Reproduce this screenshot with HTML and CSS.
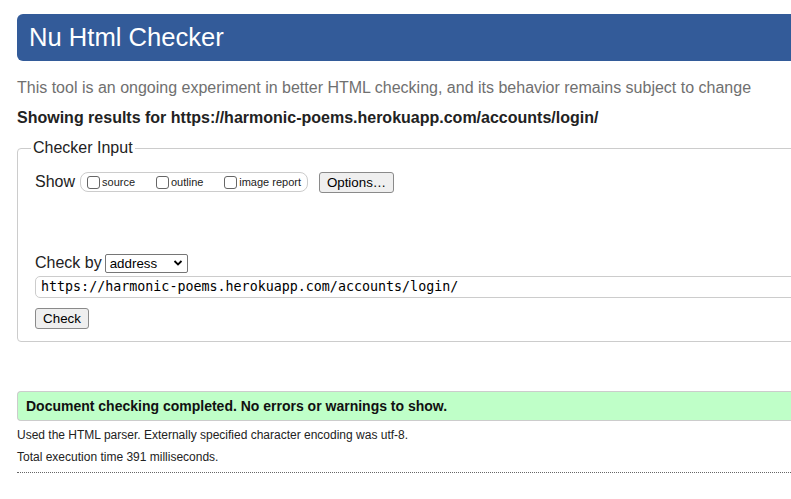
FILE: index.html
```html
<!DOCTYPE html>
<html>
<head>
<meta charset="utf-8">
<link rel="stylesheet" href="styles.css">
</head>
<body>
<div class="page">
  <h1 class="banner">Nu Html Checker</h1>
  <p class="intro">This tool is an ongoing experiment in better HTML checking, and its behavior remains subject to change</p>
  <p class="showing">Showing results for https://harmonic-poems.herokuapp.com/accounts/login/</p>
  <fieldset class="input-box">
    <legend class="legend">Checker Input</legend>
    <div class="show-row">
      <span class="show-label">Show</span>
      <span class="pill">
        <label class="opt"><span class="cb"></span>source</label>
        <label class="opt"><span class="cb"></span>outline</label>
        <label class="opt"><span class="cb"></span>image report</label>
      </span>
      <button class="btn btn-options">Options…</button>
    </div>
    <div class="checkby-row">
      <span class="show-label">Check by</span>
      <span class="select">address<svg class="chev" width="10" height="8" viewBox="0 0 10 8"><path d="M1.5 2 L5 5.5 L8.5 2" fill="none" stroke="#000" stroke-width="1.8"/></svg></span>
    </div>
    <div class="url">https://harmonic-poems.herokuapp.com/accounts/login/</div>
    <button class="btn btn-check">Check</button>
  </fieldset>
  <div class="success">Document checking completed. No errors or warnings to show.</div>
  <p class="details">Used the HTML parser. Externally specified character encoding was utf-8.</p>
  <p class="details">Total execution time 391 milliseconds.</p>
  <hr class="dots">
</div>
</body>
</html>
```
FILE: styles.css
```css
html, body {
  margin: 0;
  padding: 0;
  overflow: hidden;
  background: #fff;
}
body {
  font-family: "Liberation Sans", Arial, sans-serif;
  color: #222;
  width: 791px;
  height: 499px;
}
.page {
  padding: 14px 0 0 17px;
  width: 820px;
}
.banner {
  margin: 0;
  height: 47px;
  line-height: 47px;
  background: #335b99;
  color: #fff;
  font-size: 25.6px;
  font-weight: normal;
  padding-left: 12px;
  border-radius: 6px;
}
.intro {
  margin: 17px 0 0;
  font-size: 16px;
  line-height: 20px;
  color: #707070;
}
.showing {
  margin: 10px 0 0;
  font-size: 16px;
  line-height: 20px;
  font-weight: bold;
  color: #222;
}
.input-box {
  margin: 11px 0 0;
  border: 1px solid #ccc;
  border-radius: 4px;
  padding: 8px 17px 12px;
  min-width: 0;
}
.legend {
  font-size: 16px;
  color: #222;
  padding: 0 2px;
  margin-left: -4px;
  line-height: 18px;
}
.show-row {
  display: flex;
  align-items: center;
  height: 22px;
  margin-top: 6px;
}
.show-label {
  font-size: 16px;
  color: #222;
  margin-right: 4px;
}
.pill {
  display: inline-flex;
  align-items: center;
  height: 18px;
  border: 1px solid #ccc;
  border-radius: 8px;
  padding: 0 6px;
  width: 214px;
  justify-content: space-between;
  margin-left: 1px;
}
.opt {
  display: inline-flex;
  align-items: center;
  font-size: 11px;
  color: #222;
}
.cb {
  width: 11px;
  height: 11px;
  border: 1px solid #666;
  border-radius: 3px;
  margin-right: 2px;
  background: #fff;
}
.btn {
  font-family: "Liberation Sans", Arial, sans-serif;
  font-size: 13.33px;
  color: #000;
  background: #efefef;
  border: 1px solid #8a8a8a;
  border-radius: 3px;
  padding: 0 6px;
  height: 21px;
  line-height: 19px;
}
.btn-options {
  margin-left: 11px;
  width: 75px;
}
.checkby-row {
  display: flex;
  align-items: center;
  margin-top: 60px;
  height: 20px;
}
.checkby-row .show-label {
  margin-right: 3px;
}
.select {
  display: inline-flex;
  align-items: center;
  justify-content: space-between;
  box-sizing: border-box;
  width: 83px;
  height: 19px;
  border: 1px solid #767676;
  border-radius: 2px;
  font-size: 13.33px;
  color: #000;
  padding: 0 4px 0 4px;
  background: #fff;
}
.url {
  margin-top: 3px;
  height: 22px;
  box-sizing: border-box;
  border: 1px solid #ccc;
  border-radius: 5px;
  font-family: "DejaVu Sans Mono", "Liberation Mono", monospace;
  font-size: 13.33px;
  line-height: 20px;
  padding-left: 5px;
  color: #000;
}
.btn-check {
  display: block;
  margin-top: 10px;
  height: 21px;
  width: 54px;
  padding: 0;
}
.success {
  margin-top: 49px;
  background: #bfffc8;
  border: 1px solid #ccc;
  border-right: none;
  border-radius: 4px 0 0 4px;
  height: 28px;
  line-height: 28px;
  padding-left: 8px;
  font-size: 14px;
  font-weight: bold;
  color: #111;
}
.details {
  margin: 7px 0 0;
  font-size: 12px;
  line-height: 14px;
  color: #222;
}
.details + .details {
  margin-top: 8px;
}
.dots {
  margin: 8px 0 0;
  border: none;
  border-top: 1px dotted #666;
  height: 0;
}
```
